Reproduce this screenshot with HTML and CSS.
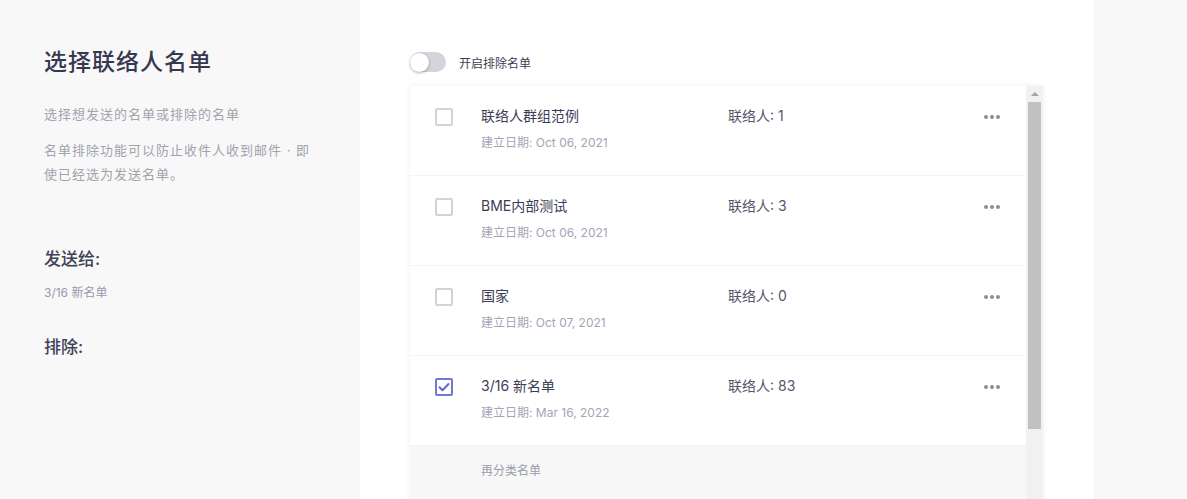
FILE: index.html
```html
<!DOCTYPE html>
<html lang="zh">
<head>
    <meta charset="UTF-8">
    <title>选择联络人名单</title>
    <link rel="stylesheet" href="styles.css">
</head>
<body>

<div class="page">
    <!-- 左侧说明 -->
    <aside class="side">
        <h1>选择联络人名单</h1>
        <p class="desc">选择想发送的名单或排除的名单</p>
        <p class="desc">名单排除功能可以防止收件人收到邮件 · 即使已经选为发送名单。</p>

        <h2>发送给:</h2>
        <p class="picked">3/16 新名单</p>

        <h2 class="exclude">排除:</h2>
    </aside>

    <!-- 名单列表 -->
    <main class="main">
        <label class="switch-row">
            <span class="switch"><span class="knob"></span></span>
            <span>开启排除名单</span>
        </label>

        <div class="list-box">
            <div class="list">
                <div class="row">
                    <span class="check"></span>
                    <div class="info">
                        <div class="name">联络人群组范例</div>
                        <div class="date">建立日期: Oct 06, 2021</div>
                    </div>
                    <div class="count">联络人: 1</div>
                    <div class="dots"><i></i><i></i><i></i></div>
                </div>
                <div class="row">
                    <span class="check"></span>
                    <div class="info">
                        <div class="name">BME内部测试</div>
                        <div class="date">建立日期: Oct 06, 2021</div>
                    </div>
                    <div class="count">联络人: 3</div>
                    <div class="dots"><i></i><i></i><i></i></div>
                </div>
                <div class="row">
                    <span class="check"></span>
                    <div class="info">
                        <div class="name">国家</div>
                        <div class="date">建立日期: Oct 07, 2021</div>
                    </div>
                    <div class="count">联络人: 0</div>
                    <div class="dots"><i></i><i></i><i></i></div>
                </div>
                <div class="row">
                    <span class="check checked">
                        <svg viewBox="0 0 18 18" width="18" height="18"><path d="M4.5 9.2l3 3 6-6.2" fill="none" stroke="#6068cf" stroke-width="2" stroke-linecap="round" stroke-linejoin="round"/></svg>
                    </span>
                    <div class="info">
                        <div class="name">3/16 新名单</div>
                        <div class="date">建立日期: Mar 16, 2022</div>
                    </div>
                    <div class="count">联络人: 83</div>
                    <div class="dots"><i></i><i></i><i></i></div>
                </div>
                <div class="section">再分类名单</div>
            </div>
            <div class="scrollbar">
                <span class="arrow"></span>
                <span class="thumb"></span>
            </div>
        </div>
    </main>

    <div class="filler"></div>
</div>

</body>
</html>
```

FILE: styles.css
```css
body {
    margin: 0;
    font-family: Inter, "Noto Sans CJK SC", sans-serif;
    color: #3c3d55;
    background-color: #f8f8f8;
    overflow: hidden;
}
.page {
    display: flex;
    height: 499px;
}
.side {
    width: 360px;
    box-sizing: border-box;
    padding: 46px 46px 0 44px;
    background-color: #f8f8f9;
}
.side h1 {
    margin: 0 0 24px;
    font-size: 23px;
    line-height: 32px;
    letter-spacing: 1px;
    font-weight: 500;
    color: #363850;
}
.side .desc {
    margin: 0 0 12px;
    font-size: 13px;
    line-height: 24px;
    letter-spacing: 1px;
    color: #a2a3ad;
}
.side h2 {
    margin: 60px 0 0;
    font-size: 17px;
    line-height: 26px;
    font-weight: 500;
    color: #404257;
}
.side .picked {
    margin: 12px 0 0;
    font-size: 12px;
    line-height: 18px;
    color: #9799ad;
}
.side h2.exclude {
    margin-top: 32px;
}
.main {
    width: 734px;
    box-sizing: border-box;
    padding: 52px 0 0 50px;
    background-color: #fff;
}
.filler {
    flex: 1;
    background-color: #f8f8f8;
}
.switch-row {
    display: flex;
    align-items: center;
    gap: 13px;
    font-size: 12px;
    color: #3c3d55;
}
.switch {
    width: 36px;
    height: 20px;
    border-radius: 10px;
    background-color: #d4d4dc;
    display: flex;
    align-items: center;
}
.knob {
    width: 19px;
    height: 19px;
    border-radius: 50%;
    background-color: #fff;
    box-shadow: 0 1px 3px rgba(0, 0, 0, 0.3);
}
.list-box {
    display: flex;
    width: 633px;
    margin-top: 14px;
    height: 420px;
    box-shadow: 0 0 6px rgba(0, 0, 0, 0.07);
    background-color: #fff;
}
.list {
    flex: 1;
}
.row {
    display: flex;
    align-items: flex-start;
    height: 90px;
    box-sizing: border-box;
    padding: 20px 26px 0 25px;
    border-bottom: 1px solid #f4f4f5;
}
.check {
    width: 18px;
    height: 18px;
    box-sizing: border-box;
    border: 2px solid #d2d2d8;
    border-radius: 2px;
    margin-top: 2px;
    margin-right: 28px;
    flex-shrink: 0;
    position: relative;
}
.check.checked {
    border-color: #7077d8;
}
.check svg {
    position: absolute;
    left: -2px;
    top: -2px;
}
.info {
    width: 247px;
}
.name {
    font-size: 14px;
    line-height: 20px;
    color: #3c3d55;
}
.date {
    margin-top: 8px;
    font-size: 12px;
    line-height: 18px;
    color: #a3a5b6;
}
.count {
    flex: 1;
    font-size: 14px;
    line-height: 20px;
    color: #55566a;
}
.dots {
    display: flex;
    gap: 2px;
    margin-top: 9px;
}
.dots i {
    width: 4px;
    height: 4px;
    border-radius: 50%;
    background-color: #8b8da2;
}
.section {
    background-color: #f7f7f8;
    padding: 16px 0 0 71px;
    height: 60px;
    font-size: 12px;
    line-height: 18px;
    color: #9a9cad;
}
.scrollbar {
    width: 17px;
    background-color: #f1f1f1;
    display: flex;
    flex-direction: column;
    align-items: center;
}
.arrow {
    margin-top: 6px;
    width: 0;
    height: 0;
    border-left: 4px solid transparent;
    border-right: 4px solid transparent;
    border-bottom: 4px solid #a3a3a3;
}
.thumb {
    margin-top: 6px;
    width: 13px;
    height: 327px;
    background-color: #c1c1c1;
}
```
